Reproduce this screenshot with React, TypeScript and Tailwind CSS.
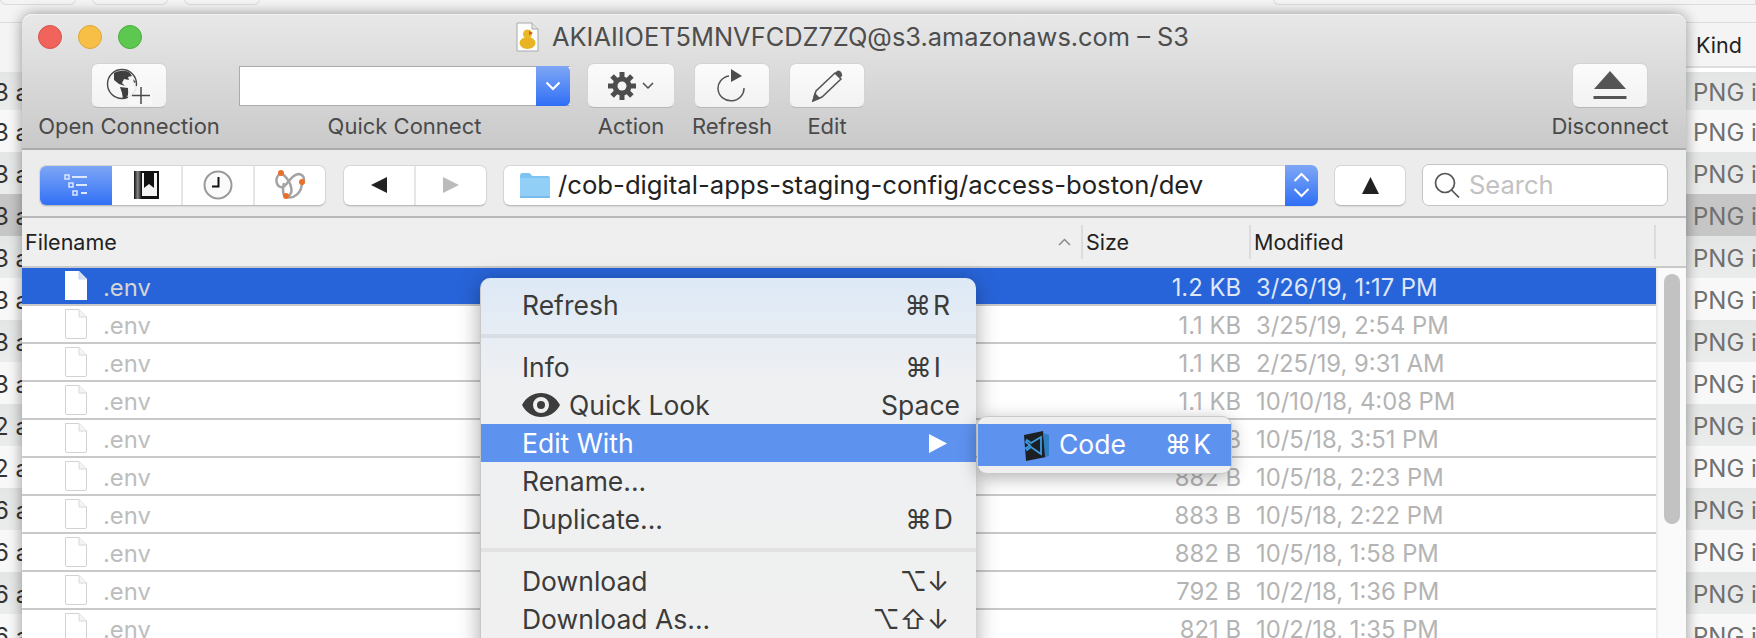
const font = "font-['Inter','DejaVu_Sans',sans-serif]";

const leftLabels = ["3 a", "3 a", "3 a", "3 a", "3 a", "3 a", "3 a", "3 a", "2 a", "2 a", "6 a", "6 a", "6 a", "6 a"];

const files = [
  { size: "1.2 KB", date: "3/26/19, 1:17 PM" },
  { size: "1.1 KB", date: "3/25/19, 2:54 PM" },
  { size: "1.1 KB", date: "2/25/19, 9:31 AM" },
  { size: "1.1 KB", date: "10/10/18, 4:08 PM" },
  { size: "883 B", date: "10/5/18, 3:51 PM" },
  { size: "882 B", date: "10/5/18, 2:23 PM" },
  { size: "883 B", date: "10/5/18, 2:22 PM" },
  { size: "882 B", date: "10/5/18, 1:58 PM" },
  { size: "792 B", date: "10/2/18, 1:36 PM" },
  { size: "821 B", date: "10/2/18, 1:35 PM" },
];

function rowTone(i: number) {
  if (i === 3) return "bg-[#c6c6c6]";
  return i % 2 === 0 ? "bg-gradient-to-b from-[#e4e5e5] to-[#ebecec]" : "bg-[#f8f8f8]";
}

function GlobeIcon() {
  return (
    <svg width="46" height="38" viewBox="0 0 46 38">
      <circle cx="16" cy="17" r="14.500" fill="#f6f6f6" stroke="#4a4a4a" strokeWidth="1.400" />
      <path d="M8 6 C13 3 21 3 24 6 L26 9 L22 10 L23 13 L18 12 L16 16 L19 19 L13 17 L8 13 Z" fill="#3f3f3f" />
      <path d="M14 20 L22 21 L24 25 L20 31 L17 32 L16 26 Z" fill="#3f3f3f" />
      <path d="M27 12 L30 15 L28 16 Z" fill="#555" />
      <rect x="22" y="19" width="24" height="19" fill="#f7f7f7" opacity="0.9" />
      <path d="M35 20 V37 M26 28.500 H44" stroke="#4a4a4a" strokeWidth="1.500" fill="none" />
    </svg>
  );
}

function GearIcon() {
  return (
    <svg width="46" height="32" viewBox="0 0 46 32">
      <g fill="#4d4d4d">
        <circle cx="14" cy="16" r="9.500" />
        {[0, 45, 90, 135, 180, 225, 270, 315].map((a) => (
          <rect key={a} x="11.500" y="2" width="5" height="6" transform={`rotate(${a} 14 16)`} />
        ))}
      </g>
      <circle cx="14" cy="16" r="4.500" fill="#f4f4f4" />
      <path d="M35 13 L40 18 L45 13" fill="none" stroke="#4d4d4d" strokeWidth="1.500" />
    </svg>
  );
}

function RefreshIcon() {
  return (
    <svg width="30" height="34" viewBox="0 0 30 34">
      <path d="M12 7 A13 12.500 0 1 0 27 19" fill="none" stroke="#555" strokeWidth="1.500" />
      <path d="M14 0 L25 7 L14 13 Z" fill="#4d4d4d" />
    </svg>
  );
}

function PencilIcon() {
  return (
    <svg width="34" height="34" viewBox="0 0 34 34">
      <path d="M3 32 L6 22 L25 4 L31 10 L12 28 Z" fill="none" stroke="#555" strokeWidth="1.500" />
      <path d="M2 33 L4.500 23.500 L10.500 29.500 Z" fill="#555" />
      <path d="M25 4 L27 2 C29 0 33 4 32 7 L30 9 Z" fill="#555" />
    </svg>
  );
}

function EjectIcon() {
  return (
    <svg width="34" height="29" viewBox="0 0 34 29">
      <path d="M17 0 L33 18 H1 Z" fill="#555" />
      <rect x="0.500" y="25" width="33" height="3" fill="#555" />
    </svg>
  );
}

function ListIcon() {
  return (
    <svg width="24" height="22" viewBox="0 0 24 22" fill="none" stroke="#dbe8ff">
      <rect x="1" y="1" width="4" height="4" strokeWidth="1.500" />
      <rect x="5" y="9" width="4" height="4" strokeWidth="1.500" />
      <rect x="9" y="17" width="4" height="4" strokeWidth="1.500" />
      <path d="M8 3 H23 M12 11 H23 M17 19 H23" strokeWidth="2" />
    </svg>
  );
}

function BookmarkIcon() {
  return (
    <svg width="26" height="28" viewBox="0 0 26 28">
      <defs>
        <linearGradient id="bookSpine" x1="0" x2="1" y1="0" y2="0">
          <stop offset="0" stopColor="#111" />
          <stop offset="0.15" stopColor="#888" />
          <stop offset="0.3" stopColor="#111" />
          <stop offset="1" stopColor="#111" />
        </linearGradient>
      </defs>
      <rect x="0" y="0" width="25" height="28" fill="url(#bookSpine)" />
      <rect x="8" y="2" width="15" height="23" fill="#f3f3f3" />
      <path d="M10 0 H20 V17 L15 13 L10 17 Z" fill="#111" />
    </svg>
  );
}

function ClockIcon() {
  return (
    <svg width="30" height="30" viewBox="0 0 30 30">
      <circle cx="15" cy="15" r="13.500" fill="#fafafa" stroke="#9a9a9a" strokeWidth="2" />
      <path d="M15.500 7 V16.500 H9" fill="none" stroke="#111" strokeWidth="2" />
    </svg>
  );
}

function BonjourIcon() {
  return (
    <svg width="32" height="32" viewBox="0 0 32 32" fill="none">
      <g stroke="#a3a3a3" strokeWidth="2.500">
        <path d="M7 4 C-1 9 3 20 9 18 C14 16 17 5 25 5 C31 6 31 13 28 15" />
        <path d="M7 4 C16 10 22 24 13 28 C9 29 8 20 10 14" />
        <path d="M28 13 C28 24 20 30 13 28" />
      </g>
      <circle cx="7" cy="4" r="3" fill="#e8702a" />
      <circle cx="28" cy="13" r="3" fill="#e8702a" />
      <circle cx="12" cy="27" r="3" fill="#e8702a" />
    </svg>
  );
}

function FolderIcon() {
  return (
    <svg width="30" height="25" viewBox="0 0 30 25">
      <path d="M0 3 C0 1 1 0 2 0 H9 C11 0 11 3 13 3 H28 C29 3 30 4 30 5 V23 C30 24 29 25 28 25 H2 C1 25 0 24 0 23 Z" fill="#7ec4f2" />
      <path d="M0 5 H30 V23 C30 24 29 25 28 25 H2 C1 25 0 24 0 23 Z" fill="#92cff6" />
      <path d="M0 24 H30" stroke="#5fa8dc" />
    </svg>
  );
}

function DuckDoc() {
  return (
    <svg width="23" height="30" viewBox="0 0 23 30">
      <path d="M1 1 H16 L22 7 V29 H1 Z" fill="#fdfdfd" stroke="#a8a8a8" />
      <path d="M16 1 V7 H22" fill="#e4e4e4" stroke="#a8a8a8" />
      <ellipse cx="11.500" cy="21" rx="8" ry="6" fill="#e8b423" />
      <circle cx="11.500" cy="12" r="4.500" fill="#eab92a" />
      <path d="M13 9 L17 11 L13 13 Z" fill="#d9541e" />
    </svg>
  );
}

function CodeIcon() {
  return (
    <svg width="28" height="31" viewBox="0 0 28 31">
      <path d="M2 5 L21 1 L24 27 L4 31 Z" fill="#1c2025" />
      <path d="M21 3 L27 5 L27 26 L23 27 Z" fill="#2f7fc4" />
      <path d="M19 7 L19 24 L9 17 L5 20 L4 18 L8 15.500 L4 12 L5 10 L9 13 Z" fill="none" stroke="#3f9be0" strokeWidth="1.800" />
    </svg>
  );
}

function FileIcon({ selected }: { selected?: boolean }) {
  return (
    <svg width="24" height="30" viewBox="0 0 24 30" className="shrink-0">
      {selected ? (
        <path d="M1 0 H15 L23 8 V29 H1 Z" fill="#ffffff" />
      ) : (
        <path d="M1.500 0.500 H15 L22.500 8 V28 Q22.500 29.500 21 29.500 H3 Q1.500 29.500 1.500 28 Z" fill="#ffffff" stroke="#d2d2d2" />
      )}
      <path d="M15 0.500 V8 H22.500" fill={selected ? "#d5dff2" : "#f4f4f4"} stroke={selected ? "#c7d5ef" : "#d8d8d8"} />
    </svg>
  );
}

function ToolbarButton({ children, width }: { children: React.ReactNode; width: string }) {
  return (
    <div className={`${width} h-[45px] flex items-center justify-center rounded-[7px] bg-gradient-to-b from-[#fbfbfb] to-[#f2f2f2] border border-[#d4d4d4] border-b-[#b8b8b8]`}>
      {children}
    </div>
  );
}

function Toolbar() {
  const label = "mt-[6px] text-[22px] leading-[24px] text-[#4a4a4a] whitespace-nowrap";
  return (
    <div className="h-[136px] rounded-t-[10px] bg-gradient-to-b from-[#e8e8e8] to-[#c9c9c9] border-b-2 border-[#acacac] border-t border-t-[#f2f2f2]">
      <div className="h-[44px] flex items-center pl-[16px]">
        <div className="flex gap-[16px]">
          <div className="w-[24px] h-[24px] rounded-full bg-[#f0645c] border border-[#d9534c]" />
          <div className="w-[24px] h-[24px] rounded-full bg-[#f8bf47] border border-[#dfa535]" />
          <div className="w-[24px] h-[24px] rounded-full bg-[#5cc84f] border border-[#4bad3f]" />
        </div>
        <div className="ml-[374px] flex items-center gap-[13px]">
          <DuckDoc />
          <span className="text-[25.400px] text-[#4d4d4d] whitespace-nowrap">AKIAIIOET5MNVFCDZ7ZQ@s3.amazonaws.com – S3</span>
        </div>
      </div>
      <div className="flex pt-[4px]">
        <div className="ml-[15px] w-[184px] flex flex-col items-center">
          <ToolbarButton width="w-[76px]"><GlobeIcon /></ToolbarButton>
          <div className={label}>Open Connection</div>
        </div>
        <div className="ml-[18px] w-[331px] flex flex-col items-center">
          <div className="h-[45px] flex items-center">
            <div className="w-[331px] h-[40px] flex bg-white border border-[#ababab] border-r-0">
              <div className="flex-1" />
              <div className="w-[34px] -my-px rounded-r-[5px] bg-gradient-to-b from-[#7ea6f5] to-[#2f6ef5] flex items-center justify-center">
                <svg width="16" height="10" viewBox="0 0 16 10"><path d="M1.500 1.500 L8 8 L14.500 1.500" fill="none" stroke="#fff" strokeWidth="2.200" /></svg>
              </div>
            </div>
          </div>
          <div className={label}>Quick Connect</div>
        </div>
        <div className="ml-[17px] w-[88px] flex flex-col items-center">
          <ToolbarButton width="w-[88px]"><GearIcon /></ToolbarButton>
          <div className={label}>Action</div>
        </div>
        <div className="ml-[19px] w-[76px] flex flex-col items-center">
          <ToolbarButton width="w-[76px]"><RefreshIcon /></ToolbarButton>
          <div className={label}>Refresh</div>
        </div>
        <div className="ml-[19px] w-[76px] flex flex-col items-center">
          <ToolbarButton width="w-[76px]"><PencilIcon /></ToolbarButton>
          <div className={label}>Edit</div>
        </div>
        <div className="ml-auto mr-[16px] w-[120px] flex flex-col items-center">
          <ToolbarButton width="w-[76px]"><EjectIcon /></ToolbarButton>
          <div className={label}>Disconnect</div>
        </div>
      </div>
    </div>
  );
}

function NavBar() {
  const pill = "bg-white rounded-[7px] border border-[#d6d6d6] border-b-[#bcbcbc] shadow-[0_1px_1px_rgba(0,0,0,0.08)]";
  return (
    <div className="h-[68px] bg-[#ececec] border-b-2 border-[#b9b9b9] flex items-center pl-[17px] pt-[4px]">
      <div className={`${pill} w-[287px] h-[41px] flex overflow-hidden`}>
        <div className="w-[73px] -my-px -ml-px bg-gradient-to-b from-[#7ea6f5] to-[#2f6ef5] flex items-center justify-center"><ListIcon /></div>
        <div className="w-[71px] flex items-center justify-center border-r-2 border-[#e6e6e6]"><BookmarkIcon /></div>
        <div className="w-[72px] flex items-center justify-center border-r-2 border-[#e6e6e6]"><ClockIcon /></div>
        <div className="flex-1 flex items-center justify-center"><BonjourIcon /></div>
      </div>
      <div className={`${pill} ml-[17px] w-[144px] h-[41px] flex`}>
        <div className="flex-1 flex items-center justify-center border-r-2 border-[#e6e6e6]">
          <svg width="16" height="16" viewBox="0 0 16 16"><path d="M16 0 V16 L0 8 Z" fill="#222" /></svg>
        </div>
        <div className="flex-1 flex items-center justify-center">
          <svg width="16" height="16" viewBox="0 0 16 16"><path d="M0 0 V16 L16 8 Z" fill="#bbb" /></svg>
        </div>
      </div>
      <div className={`${pill} ml-[16px] w-[815px] h-[41px] flex items-center`}>
        <div className="ml-[16px]"><FolderIcon /></div>
        <span className="ml-[8px] flex-1 text-[25.700px] text-[#222] whitespace-nowrap">/cob-digital-apps-staging-config/access-boston/dev</span>
        <div className="w-[33px] h-[41px] -mr-px rounded-r-[7px] bg-gradient-to-b from-[#7ea6f5] to-[#2f6ef5] flex items-center justify-center">
          <svg width="17" height="28" viewBox="0 0 17 28" fill="none" stroke="#fff" strokeWidth="2"><path d="M1.500 10 L8.500 3 L15.500 10 M1.500 18 L8.500 25 L15.500 18" /></svg>
        </div>
      </div>
      <div className={`${pill} ml-[16px] w-[72px] h-[41px] flex items-center justify-center`}>
        <svg width="17" height="17" viewBox="0 0 17 17"><path d="M8.500 0 L17 17 H0 Z" fill="#222" /></svg>
      </div>
      <div className="ml-[16px] w-[246px] h-[42px] bg-white rounded-[7px] border border-[#c4c4c4] flex items-center pl-[11px]">
        <svg width="26" height="26" viewBox="0 0 26 26" fill="none" stroke="#555" strokeWidth="1.700"><circle cx="11" cy="11" r="9.500" /><path d="M17.500 18 L25 25.500" /></svg>
        <span className="ml-[9px] text-[25.500px] text-[#c2c2c2]">Search</span>
      </div>
    </div>
  );
}

function TableHeader() {
  return (
    <div className="h-[50px] bg-[#efefef] border-b-2 border-[#c9c9c9] flex items-center text-[21.500px] text-[#222]">
      <div className="w-[1059px] pl-[3px] flex items-center justify-between pr-[10px]">
        <span>Filename</span>
        <svg width="13" height="8" viewBox="0 0 13 8"><path d="M1 7 L6.500 1.500 L12 7" fill="none" stroke="#8b8b8b" strokeWidth="1.500" /></svg>
      </div>
      <div className="w-[168px] h-[34px] pl-[3px] flex items-center border-l-2 border-[#dcdcdc]">Size</div>
      <div className="w-[407px] h-[34px] pl-[3px] flex items-center border-l-2 border-[#dcdcdc] border-r-2 border-r-[#dcdcdc]">Modified</div>
      <div className="flex-1" />
    </div>
  );
}

function FileRow({ size, date, selected }: { size: string; date: string; selected: boolean }) {
  return (
    <div className={`h-[38px] flex items-center border-b-2 border-[#c9c9c9] text-[23.800px] leading-[30px] ${selected ? "bg-[#2864d9]" : "bg-white"}`}>
      <div className="ml-[42px]"><FileIcon selected={selected} /></div>
      <span className={`ml-[15px] flex-1 pt-[4px] ${selected ? "text-[#d4d4d4]" : "text-[#bdbdbd]"}`}>.env</span>
      <span className={`w-[90px] text-right pt-[4px] ${selected ? "text-[#dfe7f7]" : "text-[#b4b4b4]"}`}>{size}</span>
      <span className={`ml-[15px] w-[400px] pt-[4px] ${selected ? "text-[#dfe7f7]" : "text-[#b4b4b4]"}`}>{date}</span>
    </div>
  );
}

function MenuRow({ label, shortcut, pad, active, icon, className }: { label: string; shortcut?: React.ReactNode; pad?: string; active?: boolean; icon?: React.ReactNode; className?: string }) {
  return (
    <div className={`h-[38px] flex items-center justify-between pl-[41px] ${pad ?? "pr-[24px]"} ${active ? "bg-[#5e92ef] text-white" : ""} ${className ?? ""}`}>
      <span className="flex items-center gap-[9px]">{icon}{label}</span>
      {shortcut}
    </div>
  );
}

function ContextMenu() {
  return (
    <div className="absolute left-[480px] top-[278px] w-[496px] h-[380px] rounded-t-[10px] overflow-hidden bg-gradient-to-b from-[#dde9f6] via-[#eff0f2] via-[28%] to-[#f0f0f0] shadow-[0_4px_22px_rgba(0,0,0,0.35)] border-l border-[#c8c8c8] text-[26.500px] leading-[32px] text-[#3b3b3b]">
      <div className="pt-[8px]">
        <MenuRow label="Refresh" shortcut={<span className="tracking-[2px]">⌘R</span>} />
      </div>
      <div className="h-[4px] mt-[10px] mb-[10px] bg-[#d9dde6]" />
      <MenuRow label="Info" shortcut={<span className="tracking-[2px]">⌘I</span>} pad="pr-[33px]" />
      <MenuRow
        label="Quick Look"
        shortcut={<span>Space</span>}
        pad="pr-[16px]"
        icon={
          <svg width="38" height="24" viewBox="0 0 38 24">
            <path fillRule="evenodd" fill="#3d3d3d" d="M0 12 C8 -4 30 -4 38 12 C30 28 8 28 0 12 Z M19 4 A8 8 0 1 0 19 20 A8 8 0 1 0 19 4 Z" />
            <circle cx="19" cy="12" r="4" fill="#3d3d3d" />
          </svg>
        }
      />
      <MenuRow
        active
        label="Edit With"
        pad="pr-[29px]"
        shortcut={<svg width="18" height="19" viewBox="0 0 18 19"><path d="M0 0 L18 9.500 L0 19 Z" fill="#fff" /></svg>}
      />
      <MenuRow label="Rename..." />
      <MenuRow label="Duplicate..." shortcut={<span className="tracking-[2px]">⌘D</span>} pad="pr-[21px]" />
      <div className="h-[4px] mt-[10px] mb-[10px] bg-[#e2e2e2]" />
      <MenuRow label="Download" shortcut={<span>⌥↓</span>} pad="pr-[27px]" />
      <MenuRow label="Download As..." shortcut={<span>⌥⇧↓</span>} pad="pr-[27px]" />
    </div>
  );
}

function SubMenu() {
  return (
    <div className="absolute left-[977px] top-[416px] w-[255px] h-[58px] rounded-[10px] bg-[#efefef] border border-[#c9c9c9] shadow-[0_4px_18px_rgba(0,0,0,0.3)] py-[7px] text-[26.500px]">
      <div className="h-[42px] bg-[#5e92ef] text-white flex items-center pl-[44px]">
        <CodeIcon />
        <span className="ml-[9px]">Code</span>
        <span className="ml-auto mr-[18px] tracking-[2px]">⌘K</span>
      </div>
    </div>
  );
}

export default function App() {
  return (
    <div className={`relative w-[1756px] h-[638px] overflow-hidden bg-[#f4f4f4] ${font}`}>
      {/* tabs of the window behind */}
      <div className="h-[6px] flex gap-[16px] -mt-px">
        <div className="w-[76px] rounded-b-[6px] border border-[#dcdcdc]" />
        <div className="w-[76px] rounded-b-[6px] border border-[#dcdcdc]" />
        <div className="w-[76px] rounded-b-[6px] border border-[#dcdcdc]" />
        <div className="ml-auto w-[483px] rounded-bl-[6px] border border-[#dcdcdc]" />
      </div>

      <div className="mt-[17px] flex justify-between">
        <div className="w-[22px] overflow-hidden">
          <div className="h-[44px] border-t border-[#dcdcdc]" />
          <div className="h-[6px]" />
          {leftLabels.map((t, i) => (
            <div key={i} className={`${i === 0 ? "h-[38px]" : "h-[42px]"} flex items-center whitespace-nowrap text-[24px] text-[#333] pt-[3px] ${rowTone(i)}`}><span className="-ml-[6px]">{t}</span></div>
          ))}
        </div>
        <div className="w-[70px] overflow-hidden">
          <div className="h-[44px] border-t border-[#dcdcdc] pl-[10px] pt-[2px] flex items-center text-[21.500px] text-[#222]">Kind</div>
          <div className="h-[6px] border-t-2 border-[#dedede] bg-white" />
          {leftLabels.map((_, i) => (
            <div key={i} className={`${i === 0 ? "h-[38px]" : "h-[42px]"} pl-[7px] pt-[3px] flex items-center whitespace-nowrap text-[24px] text-[#707070] ${rowTone(i)}`}>PNG image</div>
          ))}
        </div>
      </div>

      {/* main window */}
      <div className="absolute left-[22px] top-[14px] w-[1664px] h-[640px] rounded-t-[10px] bg-white shadow-[0_0_14px_rgba(0,0,0,0.4)]">
        <Toolbar />
        <NavBar />
        <TableHeader />
        <div className="flex">
          <div className="w-[1634px]">
            {files.map((f, i) => (
              <FileRow key={i} size={f.size} date={f.date} selected={i === 0} />
            ))}
          </div>
          <div className="flex-1 h-[400px] bg-[#fafafa] border-l-2 border-[#ececec] pt-[6px] pl-[6px]">
            <div className="w-[16px] h-[250px] rounded-full bg-[#c2c2c2]" />
          </div>
        </div>
      </div>

      <ContextMenu />
      <SubMenu />
    </div>
  );
}
